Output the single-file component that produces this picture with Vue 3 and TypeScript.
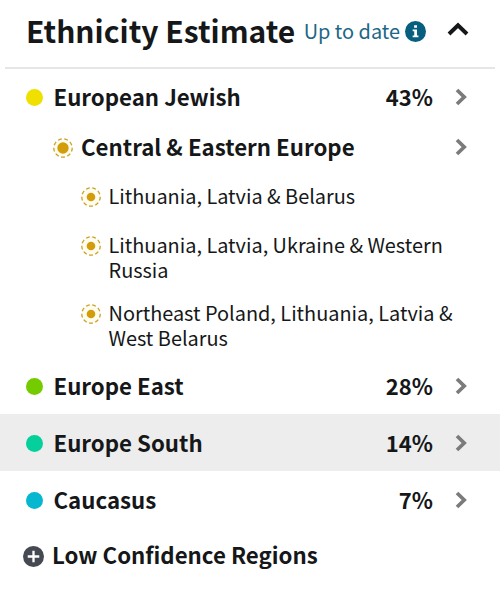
<script setup lang="ts">
interface Region {
  name: string
  percent: string
  color: string
  active?: boolean
}

const topRegion: Region = { name: 'European Jewish', percent: '43%', color: '#f0e000' }
const communities: string[] = [
  'Lithuania, Latvia & Belarus',
  'Lithuania, Latvia, Ukraine & Western Russia',
  'Northeast Poland, Lithuania, Latvia & West Belarus',
]
const otherRegions: Region[] = [
  { name: 'Europe East', percent: '28%', color: '#74cc00' },
  { name: 'Europe South', percent: '14%', color: '#05cf9b', active: true },
  { name: 'Caucasus', percent: '7%', color: '#05b8cf' },
]
</script>

<template>
  <main class="panel">
    <header class="header">
      <h1 class="title">Ethnicity Estimate</h1>
      <span class="status">Up to date</span>
      <svg class="info" viewBox="0 0 20 20">
        <circle cx="10" cy="10" r="10" fill="#075f80" />
        <path d="M8.7 4h2.7v2.5H8.7zM7.3 8.1h4.1v5.6h1.4v1.7H7.3v-1.7h1.5V9.8H7.3z" fill="#fff" />
      </svg>
      <svg class="collapse" viewBox="0 0 22 14">
        <path d="M2 12 11 3.3 20 12" fill="none" stroke="#151719" stroke-width="4" />
      </svg>
    </header>

    <div class="row">
      <span class="dot" :style="{ background: topRegion.color }"></span>
      <span class="name">{{ topRegion.name }}</span>
      <span class="percent">{{ topRegion.percent }}</span>
      <svg class="chevron" viewBox="0 0 12 18"><path d="M2 2 9.2 9 2 16" /></svg>
    </div>

    <div class="row group">
      <svg class="ring" viewBox="0 0 20 20">
        <circle class="halo" cx="10" cy="10" r="9.2" pathLength="90" />
        <circle cx="10" cy="10" r="5.7" fill="#d39c0b" />
      </svg>
      <span class="name">Central &amp; Eastern Europe</span>
      <svg class="chevron" viewBox="0 0 12 18"><path d="M2 2 9.2 9 2 16" /></svg>
    </div>

    <ul class="communities">
      <li v-for="item in communities" :key="item" class="community">
        <svg class="ring" viewBox="0 0 20 20">
          <circle class="halo" cx="10" cy="10" r="9.2" pathLength="90" />
          <circle cx="10" cy="10" r="4.3" fill="#d39c0b" />
        </svg>
        <span class="place">{{ item }}</span>
      </li>
    </ul>

    <div v-for="region in otherRegions" :key="region.name" class="row other" :class="{ active: region.active }">
      <span class="dot" :style="{ background: region.color }"></span>
      <span class="name">{{ region.name }}</span>
      <span class="percent">{{ region.percent }}</span>
      <svg class="chevron" viewBox="0 0 12 18"><path d="M2 2 9.2 9 2 16" /></svg>
    </div>

    <div class="row low">
      <svg class="plus" viewBox="0 0 20 20">
        <circle cx="10" cy="10" r="10" fill="#454a52" />
        <path d="M10 4.5v11M4.5 10h11" stroke="#fff" stroke-width="2.2" />
      </svg>
      <span class="name">Low Confidence Regions</span>
    </div>
  </main>
</template>

<style>
body {
  margin: 0;
  background: #fff;
}
</style>

<style scoped>
.panel {
  box-sizing: border-box;
  width: 500px;
  height: 592px;
  overflow: hidden;
  background: #fff;
  color: #151719;
  font-family: 'Noto Sans CJK SC', 'Noto Sans', sans-serif;
}
svg {
  display: block;
  flex: none;
}
.header {
  box-sizing: border-box;
  display: flex;
  align-items: center;
  height: 69px;
  margin: 0 5px;
  padding: 0 26px 6px 21px;
  border-bottom: 2px solid #e6e6e6;
}
.title {
  margin: -2px 0 0;
  font-size: 30px;
  line-height: 40px;
  font-weight: 700;
  white-space: nowrap;
}
.status {
  margin-left: 8.5px;
  font-size: 19.9px;
  line-height: 30px;
  color: #1b6785;
  white-space: nowrap;
}
.info {
  width: 21px;
  height: 21px;
  margin-left: 4.5px;
  margin-top: 2px;
}
.collapse {
  width: 22px;
  height: 14px;
  margin-left: auto;
  margin-top: -3px;
}
.row {
  box-sizing: border-box;
  display: flex;
  align-items: center;
  height: 57px;
  padding: 0 33px 0 25.5px;
}
.row.other {
  padding-top: 2px;
}
.row.active {
  background: #ededed;
}
.dot {
  flex: none;
  width: 17px;
  height: 17px;
  margin-right: 11px;
  border-radius: 50%;
}
.name,
.percent {
  margin-top: -4px;
  font-size: 22px;
  line-height: 30px;
  font-weight: 700;
  white-space: nowrap;
}
.name {
  font-size: 22.25px;
}
.percent {
  margin-left: auto;
}
.chevron {
  width: 12px;
  height: 18px;
  margin-left: 22px;
  margin-top: -1px;
}
.chevron path {
  fill: none;
  stroke: #7b7b7b;
  stroke-width: 3.7;
}
.group {
  height: 43px;
  padding-left: 53px;
}
.group .chevron {
  margin-left: auto;
}
.ring {
  width: 20px;
  height: 20px;
  margin-right: 8px;
  overflow: visible;
}
.halo {
  fill: #fffdf0;
  stroke: #cc9f28;
  stroke-width: 1.3;
  stroke-dasharray: 6 4;
  stroke-dashoffset: -19.5;
}
.communities {
  margin: 0;
  padding: 14px 0 0 80.5px;
  list-style: none;
}
.community {
  box-sizing: border-box;
  display: flex;
  align-items: flex-start;
  min-height: 49px;
  padding-bottom: 18px;
}
.community:last-child {
  padding-bottom: 7px;
}
.community .ring {
  margin-top: 3.5px;
}
.place {
  width: 360px;
  font-size: 19.9px;
  line-height: 25px;
}
.low {
  height: 56px;
  padding-left: 22.5px;
}
.plus {
  width: 21px;
  height: 21px;
  margin-right: 8.5px;
}
</style>
